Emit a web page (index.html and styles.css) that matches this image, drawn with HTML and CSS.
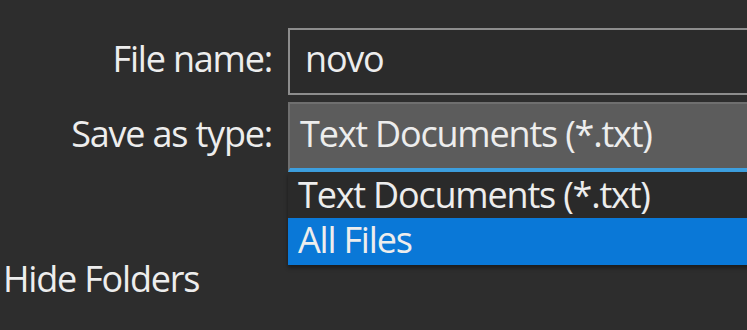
FILE: index.html
```html
<!DOCTYPE html>
<html lang="en">
<head>
  <meta charset="UTF-8">
  <title>Save As</title>
  <link rel="stylesheet" href="styles.css">
</head>
<body>
  <div class="save-form">
    <label class="field-label" for="fileName">File name:</label>
    <div class="text-field" id="fileName">novo</div>

    <label class="field-label" for="saveType">Save as type:</label>
    <div class="combo" id="saveType">
      <div class="combo-value">Text Documents (*.txt)</div>
      <ul class="combo-list">
        <li class="combo-item">Text Documents (*.txt)</li>
        <li class="combo-item selected">All Files</li>
      </ul>
    </div>
  </div>

  <div class="footer">
    <span class="toggle-folders">Hide Folders</span>
  </div>
</body>
</html>
```

FILE: styles.css
```css
body {
  margin: 0;
  background-color: #2d2d2d;
  color: #ededed;
  font-family: "Open Sans", "Noto Sans", sans-serif;
  font-size: 36px;
  letter-spacing: -1.2px;
  overflow: hidden;
  height: 330px;
}
.save-form {
  display: grid;
  grid-template-columns: 272px 480px;
  column-gap: 16px;
  row-gap: 7px;
  align-items: baseline;
  padding-top: 28px;
}
.field-label {
  text-align: right;
}
.text-field {
  box-sizing: border-box;
  height: 67px;
  border: 2px solid #8d8d8d;
  background-color: #2b2b2b;
  padding-left: 15px;
  line-height: 57px;
}
.combo {
  position: relative;
  box-sizing: border-box;
  height: 70px;
  background-color: #5c5c5c;
  border: 2px solid #6f6f6f;
  border-bottom: 4px solid #3d9fdf;
}
.combo-value {
  padding-left: 10px;
  line-height: 60px;
}
.combo-list {
  position: absolute;
  top: calc(100% + 4px);
  left: -2px;
  right: -2px;
  margin: 0;
  padding: 0;
  list-style: none;
  background-color: #2a2a2a;
  box-shadow: 0 3px 4px rgba(0, 0, 0, 0.4);
}
.combo-item {
  height: 46px;
  line-height: 46px;
  padding-left: 10px;
}
.combo-item.selected {
  height: 47px;
  line-height: 44px;
  background-color: #0a78d7;
}
.footer {
  padding: 82px 0 0 3px;
}
```
